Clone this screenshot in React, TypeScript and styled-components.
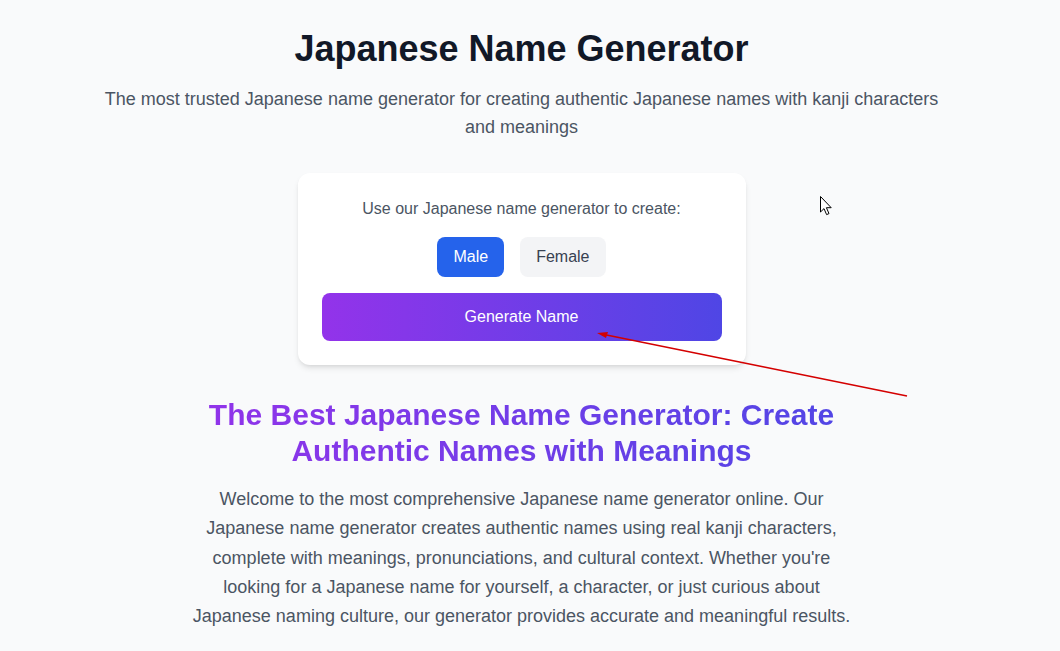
import React, { useState } from "react";
import styled, { createGlobalStyle } from "styled-components";

const GlobalStyle = createGlobalStyle`
  html, body {
    margin: 0;
    padding: 0;
    background: #f9fafb;
    font-family: "Liberation Sans", Arial, sans-serif;
  }
  * { box-sizing: border-box; }
`;

const Page = styled.main`
  width: calc(100% - 17px);
  padding: 29px 16px 40px;
  display: flex;
  flex-direction: column;
  align-items: center;
`;

const Title = styled.h1`
  margin: 0;
  font-size: 36px;
  line-height: 40px;
  font-weight: 700;
  color: #111827;
  text-align: center;
`;

const Subtitle = styled.p`
  margin: 16px 0 0;
  max-width: 850px;
  font-size: 18px;
  line-height: 28px;
  color: #4b5563;
  text-align: center;
`;

const Card = styled.section`
  margin-top: 32px;
  width: 448px;
  background: #ffffff;
  border-radius: 12px;
  box-shadow: 0 4px 6px -1px rgba(0, 0, 0, 0.1), 0 2px 4px -2px rgba(0, 0, 0, 0.1);
  padding: 24px;
  display: flex;
  flex-direction: column;
  align-items: center;
  gap: 16px;
`;

const CardLabel = styled.p`
  margin: 0;
  font-size: 16px;
  line-height: 24px;
  color: #4b5563;
`;

const Toggle = styled.div`
  display: flex;
  gap: 16px;
`;

const ToggleButton = styled.button<{ $active: boolean }>`
  border: none;
  border-radius: 8px;
  padding: 8px 16px;
  font-family: inherit;
  font-size: 16px;
  line-height: 24px;
  cursor: pointer;
  background: ${(p) => (p.$active ? "#2563eb" : "#f3f4f6")};
  color: ${(p) => (p.$active ? "#ffffff" : "#374151")};
`;

const GenerateButton = styled.button`
  width: 100%;
  height: 48px;
  border: none;
  border-radius: 8px;
  background: linear-gradient(to right, #9333ea, #4f46e5);
  color: #ffffff;
  font-family: inherit;
  font-size: 16px;
  line-height: 24px;
  cursor: pointer;
`;

const Article = styled.section`
  margin-top: 32px;
  max-width: 672px;
  display: flex;
  flex-direction: column;
  align-items: center;
`;

const SectionTitle = styled.h2`
  margin: 0 0 16px;
  font-size: 30px;
  line-height: 36px;
  font-weight: 700;
  text-align: center;
  background: linear-gradient(to right, #9333ea, #4f46e5);
  -webkit-background-clip: text;
  background-clip: text;
  color: transparent;
`;

const Body = styled.p`
  margin: 0;
  font-size: 18px;
  line-height: 29.25px;
  color: #4b5563;
  text-align: center;
`;

const Overlay = styled.svg`
  position: fixed;
  left: 0;
  top: 0;
  width: 1060px;
  height: 651px;
  pointer-events: none;
`;

export default function App() {
  const [gender, setGender] = useState<"male" | "female">("male");
  return (
    <>
      <GlobalStyle />
      <Page>
        <Title>Japanese Name Generator</Title>
        <Subtitle>
          The most trusted Japanese name generator for creating authentic Japanese names with kanji characters and meanings
        </Subtitle>
        <Card>
          <CardLabel>Use our Japanese name generator to create:</CardLabel>
          <Toggle>
            <ToggleButton $active={gender === "male"} onClick={() => setGender("male")}>
              Male
            </ToggleButton>
            <ToggleButton $active={gender === "female"} onClick={() => setGender("female")}>
              Female
            </ToggleButton>
          </Toggle>
          <GenerateButton>Generate Name</GenerateButton>
        </Card>
        <Article>
          <SectionTitle>
            The Best Japanese Name Generator: Create Authentic Names with Meanings
          </SectionTitle>
          <Body>
            Welcome to the most comprehensive Japanese name generator online. Our Japanese name generator creates authentic
            names using real kanji characters, complete with meanings, pronunciations, and cultural context. Whether you're
            looking for a Japanese name for yourself, a character, or just curious about Japanese naming culture, our
            generator provides accurate and meaningful results.
          </Body>
        </Article>
      </Page>
      <Overlay viewBox="0 0 1060 651">
        <line x1="907" y1="396" x2="604" y2="334.5" stroke="#d40000" strokeWidth="1.6" />
        <polygon points="597,333 608,332 606,338" fill="#d40000" />
        <path
          d="M820.5 196.5 L820.5 212 L824 208.6 L826.6 214.6 L829 213.6 L826.4 207.7 L831.2 207.7 Z"
          fill="#ffffff"
          stroke="#000000"
          strokeWidth="1"
          strokeLinejoin="round"
        />
      </Overlay>
    </>
  );
}
